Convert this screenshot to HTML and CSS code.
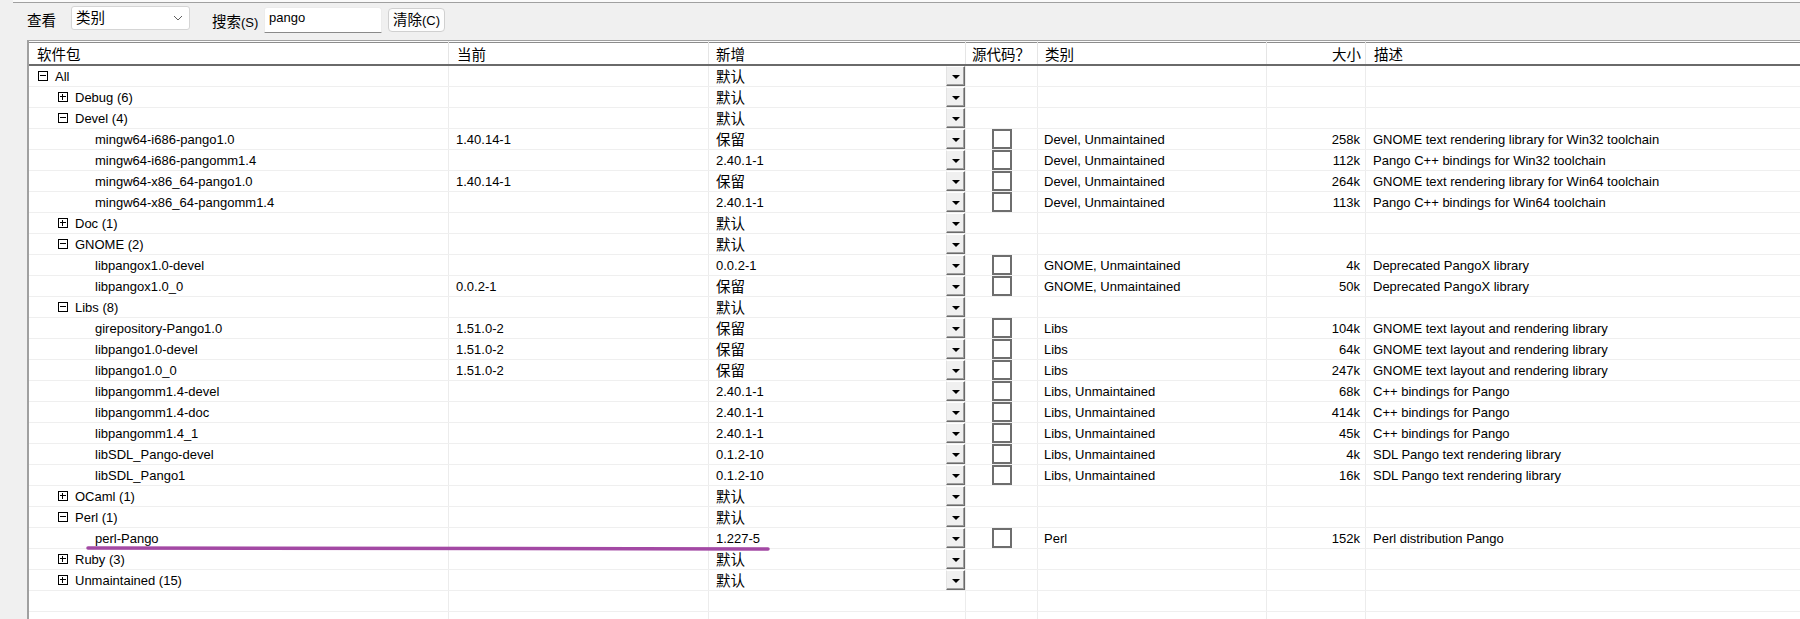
FILE: index.html
```html
<!DOCTYPE html>
<html lang="zh-CN">
<head>
<meta charset="utf-8">
<title>Packages</title>
<link rel="stylesheet" href="styles.css">
</head>
<body>
<div class="window">
  <div class="topedge"></div>
  <div class="toolbar">
    <span class="lbl view-lbl">查看</span>
    <div class="combo"><span class="combo-text">类别</span><svg class="chev" width="10" height="6" viewBox="0 0 10 6"><polyline points="1,1 5,5 9,1" fill="none" stroke="#606060" stroke-width="1"/></svg></div>
    <span class="lbl search-lbl">搜索<span class="acc">(S)</span></span>
    <div class="search">pango</div>
    <button class="btn">清除<span class="acc">(C)</span></button>
  </div>
  <div class="list">
    <div class="row header">
      <div class="h h1">软件包</div>
      <div class="h h2">当前</div>
      <div class="h h3">新增</div>
      <div class="h h4">源代码？</div>
      <div class="h h5">类别</div>
      <div class="h h6">大小</div>
      <div class="h h7">描述</div>
    </div>

    <div class="row"><div class="c name l0"><span class="exp minus"></span>All</div><div class="c cur"></div><div class="c new"><span class="cjk">默认</span><span class="dd"></span></div><div class="c src"></div><div class="c cat"></div><div class="c size"></div><div class="c desc"></div></div>
    <div class="row"><div class="c name l1"><span class="exp plus"></span>Debug (6)</div><div class="c cur"></div><div class="c new"><span class="cjk">默认</span><span class="dd"></span></div><div class="c src"></div><div class="c cat"></div><div class="c size"></div><div class="c desc"></div></div>
    <div class="row"><div class="c name l1"><span class="exp minus"></span>Devel (4)</div><div class="c cur"></div><div class="c new"><span class="cjk">默认</span><span class="dd"></span></div><div class="c src"></div><div class="c cat"></div><div class="c size"></div><div class="c desc"></div></div>
    <div class="row"><div class="c name l2">mingw64-i686-pango1.0</div><div class="c cur">1.40.14-1</div><div class="c new"><span class="cjk">保留</span><span class="dd"></span></div><div class="c src"><span class="cb"></span></div><div class="c cat">Devel, Unmaintained</div><div class="c size">258k</div><div class="c desc">GNOME text rendering library for Win32 toolchain</div></div>
    <div class="row"><div class="c name l2">mingw64-i686-pangomm1.4</div><div class="c cur"></div><div class="c new"><span>2.40.1-1</span><span class="dd"></span></div><div class="c src"><span class="cb"></span></div><div class="c cat">Devel, Unmaintained</div><div class="c size">112k</div><div class="c desc">Pango C++ bindings for Win32 toolchain</div></div>
    <div class="row"><div class="c name l2">mingw64-x86_64-pango1.0</div><div class="c cur">1.40.14-1</div><div class="c new"><span class="cjk">保留</span><span class="dd"></span></div><div class="c src"><span class="cb"></span></div><div class="c cat">Devel, Unmaintained</div><div class="c size">264k</div><div class="c desc">GNOME text rendering library for Win64 toolchain</div></div>
    <div class="row"><div class="c name l2">mingw64-x86_64-pangomm1.4</div><div class="c cur"></div><div class="c new"><span>2.40.1-1</span><span class="dd"></span></div><div class="c src"><span class="cb"></span></div><div class="c cat">Devel, Unmaintained</div><div class="c size">113k</div><div class="c desc">Pango C++ bindings for Win64 toolchain</div></div>
    <div class="row"><div class="c name l1"><span class="exp plus"></span>Doc (1)</div><div class="c cur"></div><div class="c new"><span class="cjk">默认</span><span class="dd"></span></div><div class="c src"></div><div class="c cat"></div><div class="c size"></div><div class="c desc"></div></div>
    <div class="row"><div class="c name l1"><span class="exp minus"></span>GNOME (2)</div><div class="c cur"></div><div class="c new"><span class="cjk">默认</span><span class="dd"></span></div><div class="c src"></div><div class="c cat"></div><div class="c size"></div><div class="c desc"></div></div>
    <div class="row"><div class="c name l2">libpangox1.0-devel</div><div class="c cur"></div><div class="c new"><span>0.0.2-1</span><span class="dd"></span></div><div class="c src"><span class="cb"></span></div><div class="c cat">GNOME, Unmaintained</div><div class="c size">4k</div><div class="c desc">Deprecated PangoX library</div></div>
    <div class="row"><div class="c name l2">libpangox1.0_0</div><div class="c cur">0.0.2-1</div><div class="c new"><span class="cjk">保留</span><span class="dd"></span></div><div class="c src"><span class="cb"></span></div><div class="c cat">GNOME, Unmaintained</div><div class="c size">50k</div><div class="c desc">Deprecated PangoX library</div></div>
    <div class="row"><div class="c name l1"><span class="exp minus"></span>Libs (8)</div><div class="c cur"></div><div class="c new"><span class="cjk">默认</span><span class="dd"></span></div><div class="c src"></div><div class="c cat"></div><div class="c size"></div><div class="c desc"></div></div>
    <div class="row"><div class="c name l2">girepository-Pango1.0</div><div class="c cur">1.51.0-2</div><div class="c new"><span class="cjk">保留</span><span class="dd"></span></div><div class="c src"><span class="cb"></span></div><div class="c cat">Libs</div><div class="c size">104k</div><div class="c desc">GNOME text layout and rendering library</div></div>
    <div class="row"><div class="c name l2">libpango1.0-devel</div><div class="c cur">1.51.0-2</div><div class="c new"><span class="cjk">保留</span><span class="dd"></span></div><div class="c src"><span class="cb"></span></div><div class="c cat">Libs</div><div class="c size">64k</div><div class="c desc">GNOME text layout and rendering library</div></div>
    <div class="row"><div class="c name l2">libpango1.0_0</div><div class="c cur">1.51.0-2</div><div class="c new"><span class="cjk">保留</span><span class="dd"></span></div><div class="c src"><span class="cb"></span></div><div class="c cat">Libs</div><div class="c size">247k</div><div class="c desc">GNOME text layout and rendering library</div></div>
    <div class="row"><div class="c name l2">libpangomm1.4-devel</div><div class="c cur"></div><div class="c new"><span>2.40.1-1</span><span class="dd"></span></div><div class="c src"><span class="cb"></span></div><div class="c cat">Libs, Unmaintained</div><div class="c size">68k</div><div class="c desc">C++ bindings for Pango</div></div>
    <div class="row"><div class="c name l2">libpangomm1.4-doc</div><div class="c cur"></div><div class="c new"><span>2.40.1-1</span><span class="dd"></span></div><div class="c src"><span class="cb"></span></div><div class="c cat">Libs, Unmaintained</div><div class="c size">414k</div><div class="c desc">C++ bindings for Pango</div></div>
    <div class="row"><div class="c name l2">libpangomm1.4_1</div><div class="c cur"></div><div class="c new"><span>2.40.1-1</span><span class="dd"></span></div><div class="c src"><span class="cb"></span></div><div class="c cat">Libs, Unmaintained</div><div class="c size">45k</div><div class="c desc">C++ bindings for Pango</div></div>
    <div class="row"><div class="c name l2">libSDL_Pango-devel</div><div class="c cur"></div><div class="c new"><span>0.1.2-10</span><span class="dd"></span></div><div class="c src"><span class="cb"></span></div><div class="c cat">Libs, Unmaintained</div><div class="c size">4k</div><div class="c desc">SDL Pango text rendering library</div></div>
    <div class="row"><div class="c name l2">libSDL_Pango1</div><div class="c cur"></div><div class="c new"><span>0.1.2-10</span><span class="dd"></span></div><div class="c src"><span class="cb"></span></div><div class="c cat">Libs, Unmaintained</div><div class="c size">16k</div><div class="c desc">SDL Pango text rendering library</div></div>
    <div class="row"><div class="c name l1"><span class="exp plus"></span>OCaml (1)</div><div class="c cur"></div><div class="c new"><span class="cjk">默认</span><span class="dd"></span></div><div class="c src"></div><div class="c cat"></div><div class="c size"></div><div class="c desc"></div></div>
    <div class="row"><div class="c name l1"><span class="exp minus"></span>Perl (1)</div><div class="c cur"></div><div class="c new"><span class="cjk">默认</span><span class="dd"></span></div><div class="c src"></div><div class="c cat"></div><div class="c size"></div><div class="c desc"></div></div>
    <div class="row"><div class="c name l2">perl-Pango</div><div class="c cur"></div><div class="c new"><span>1.227-5</span><span class="dd"></span></div><div class="c src"><span class="cb"></span></div><div class="c cat">Perl</div><div class="c size">152k</div><div class="c desc">Perl distribution Pango</div></div>
    <div class="row"><div class="c name l1"><span class="exp plus"></span>Ruby (3)</div><div class="c cur"></div><div class="c new"><span class="cjk">默认</span><span class="dd"></span></div><div class="c src"></div><div class="c cat"></div><div class="c size"></div><div class="c desc"></div></div>
    <div class="row"><div class="c name l1"><span class="exp plus"></span>Unmaintained (15)</div><div class="c cur"></div><div class="c new"><span class="cjk">默认</span><span class="dd"></span></div><div class="c src"></div><div class="c cat"></div><div class="c size"></div><div class="c desc"></div></div>
    <div class="row"><div class="c"></div><div class="c"></div><div class="c"></div><div class="c"></div><div class="c"></div><div class="c"></div><div class="c"></div></div>
    <div class="row"><div class="c"></div><div class="c"></div><div class="c"></div><div class="c"></div><div class="c"></div><div class="c"></div><div class="c"></div></div>
  </div>
</div>
<svg class="annot" width="1800" height="619" viewBox="0 0 1800 619"><path d="M88 548 L768 549" stroke="#a349a4" stroke-width="3.5" stroke-linecap="round" fill="none"/></svg>
</body>
</html>
```
FILE: styles.css
```css
html, body {
  margin: 0;
  padding: 0;
}
body {
  background: #f0f0f0;
  width: 1800px;
  height: 619px;
  overflow: hidden;
  position: relative;
  font-family: "Liberation Sans", Arial, "Noto Sans CJK SC", sans-serif;
  font-size: 13px;
  color: #000;
}
.window {
  display: flex;
  flex-direction: column;
  height: 619px;
}
.topedge {
  margin-left: 13px;
  height: 2px;
  background: #fafafa;
  border-bottom: 1px solid #a0a0a0;
  flex: none;
}
.toolbar {
  height: 37px;
  flex: none;
  display: flex;
  align-items: flex-start;
  padding-left: 27px;
  box-sizing: border-box;
}
.lbl {
  font-family: "Noto Sans CJK SC", sans-serif;
  font-size: 14.5px;
  line-height: 20px;
  white-space: nowrap;
}
.acc {
  font-family: "Liberation Sans", Arial, sans-serif;
  font-size: 13px;
}
.view-lbl {
  width: 29px;
  margin-top: 7px;
}
.combo {
  margin-left: 15px;
  margin-top: 3px;
  width: 119px;
  height: 24px;
  box-sizing: border-box;
  background: #fff;
  border: 1px solid #d5d5d5;
  border-radius: 3px;
  display: flex;
  align-items: center;
  justify-content: space-between;
  padding: 0 5px 0 4px;
}
.combo-text {
  font-family: "Noto Sans CJK SC", sans-serif;
  font-size: 14.5px;
  line-height: 20px;
  margin-top: -2px;
}
.chev {
  display: block;
  margin-right: 1px;
}
.search-lbl {
  margin-left: 22px;
  margin-top: 8px;
  width: 52px;
}
.search {
  margin-top: 4px;
  width: 118px;
  height: 26px;
  box-sizing: border-box;
  background: #fff;
  border: 1px solid #ececec;
  border-bottom: 1px solid #8a8a8a;
  border-radius: 3px 3px 0 0;
  padding: 2px 0 0 4px;
  font-size: 13px;
  line-height: 16px;
}
.btn {
  margin: 5px 0 0 6px;
  width: 57px;
  height: 24px;
  box-sizing: border-box;
  background: #fdfdfd;
  border: 1px solid #d0d0d0;
  border-radius: 4px;
  padding: 0;
  font-family: "Noto Sans CJK SC", sans-serif;
  font-size: 14.5px;
  line-height: 20px;
  color: #000;
}
.list {
  flex: 1;
  margin-left: 27px;
  background: #fff;
  border-left: 2px solid #a0a0a0;
  border-top: 1px solid #a0a0a0;
  overflow: hidden;
}
.row {
  display: grid;
  grid-template-columns: 420px 260px 257px 72px 229px 99px 1fr;
  height: 21px;
  box-sizing: border-box;
  border-bottom: 1px solid #efefef;
}
.header {
  height: 25px;
  border-bottom: 2px solid #6a6a6a;
  box-shadow: inset 0 1px 0 #fcfcfc, inset 0 2px 0 #8c8c8c;
}
.h {
  font-family: "Noto Sans CJK SC", sans-serif;
  font-size: 14.5px;
  line-height: 20px;
  display: flex;
  align-items: center;
  padding-top: 2px;
  border-right: 1px solid #e5e5e5;
  white-space: nowrap;
}
.h1 { padding-left: 8px; }
.h2 { padding-left: 8px; }
.h3 { padding-left: 7px; }
.h4 { padding-left: 6px; }
.h5 { padding-left: 7px; }
.h6 { justify-content: flex-end; padding-right: 4px; }
.h7 { padding-left: 8px; border-right: none; }
.c {
  display: flex;
  align-items: center;
  border-right: 1px solid #ececec;
  white-space: nowrap;
  overflow: hidden;
  min-width: 0;
}
.c:last-child { border-right: none; }
.cjk {
  font-family: "Noto Sans CJK SC", sans-serif;
  font-size: 14.5px;
  line-height: 20px;
}
.name.l0 { padding-left: 9px; }
.name.l1 { padding-left: 29px; }
.name.l2 { padding-left: 66px; }
.exp {
  position: relative;
  width: 10px;
  height: 10px;
  box-sizing: border-box;
  border: 1px solid #000;
  margin-right: 7px;
  flex: none;
}
.exp::before {
  content: "";
  position: absolute;
  left: 1px;
  top: 3px;
  width: 6px;
  height: 1px;
  background: #000;
}
.exp.plus::after {
  content: "";
  position: absolute;
  left: 3px;
  top: 1px;
  width: 1px;
  height: 6px;
  background: #000;
}
.cur { padding-left: 7px; }
.new {
  padding-left: 7px;
  justify-content: space-between;
}
.dd {
  flex: none;
  width: 19px;
  height: 20px;
  box-sizing: border-box;
  background: #f0f0f0;
  border: 1px solid;
  border-color: #ffffff #6a6a6a #6a6a6a #e3e3e3;
  box-shadow: inset -1px -1px 0 #a0a0a0;
  display: flex;
  align-items: center;
  justify-content: center;
}
.dd::after {
  content: "";
  width: 0;
  height: 0;
  border-left: 4px solid transparent;
  border-right: 4px solid transparent;
  border-top: 4px solid #000;
  margin-top: 1px;
}
.src { justify-content: center; }
.cb {
  width: 20px;
  height: 20px;
  box-sizing: border-box;
  border: 2px solid #6e6e6e;
  background: #fff;
}
.cat { padding-left: 6px; }
.size { justify-content: flex-end; padding-right: 5px; }
.desc { padding-left: 7px; }
.annot {
  position: absolute;
  left: 0;
  top: 0;
  pointer-events: none;
}
```
